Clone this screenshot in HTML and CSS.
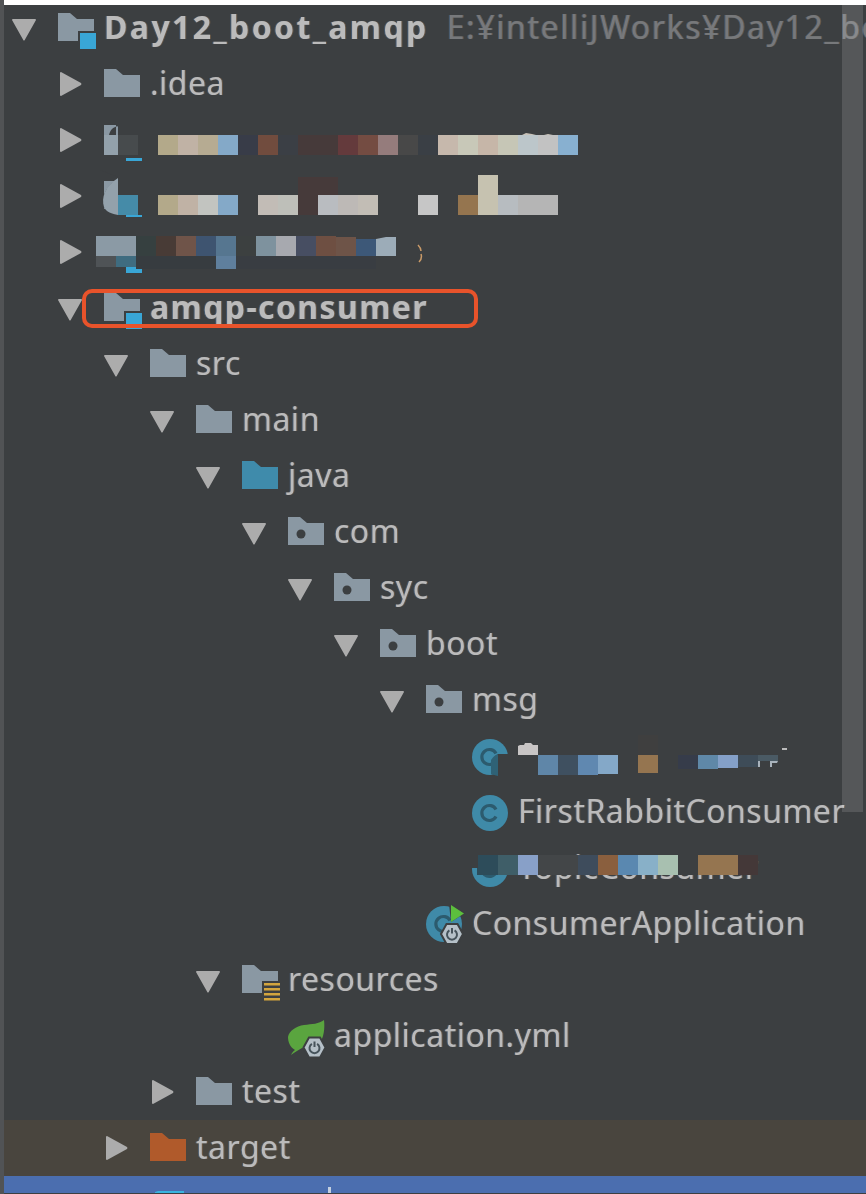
FILE: index.html
```html
<!DOCTYPE html>
<html lang="en">
<head>
  <meta charset="UTF-8">
  <meta name="viewport" content="width=device-width, initial-scale=1.0">
  <title>Project tree</title>
  <link rel="stylesheet" href="styles.css">
</head>
<body>

<svg class="sprites" aria-hidden="true">
  <defs>
    <g id="arrow-down"><path d="M1 3h22a1 1 0 0 1 1 1L13 23.500a1 1 0 0 1-2 0L0 4a1 1 0 0 1 1-1z"/></g>
    <g id="arrow-right"><path d="M2 1a1 1 0 0 1 1-1l20 11a1.500 1.500 0 0 1 0 2L3 24a1 1 0 0 1-1-1z"/></g>
    <g id="folder"><path d="M0-1h12l7 6h17v22H0z"/></g>
    <g id="module">
      <path d="M0-1h12l7 6h17v22H0z"/>
      <rect x="20" y="17" width="18" height="18" fill="#3c3f41"/>
      <rect x="22" y="19" width="16" height="16" fill="#39a6d6"/>
    </g>
    <g id="package">
      <path d="M0-1h12l7 6h17v22H0z"/>
      <circle cx="13" cy="16" r="4.500" fill="#3c3f41"/>
    </g>
    <g id="resources">
      <path d="M0-1h12l7 6h17v22H0z"/>
      <rect x="20" y="15" width="18" height="21" fill="#3c3f41"/>
      <path d="M22 17h16v2.500H22zM22 22h16v2.500H22zM22 27h16v2.500H22zM22 32h16v2.500H22z" fill="#d3a53e"/>
    </g>
    <g id="class">
      <circle cx="18" cy="15" r="18" fill="#3f8aa8"/>
      <path d="M24 11.500a7.500 7.500 0 1 0 0 7" fill="none" stroke="#2c5b6e" stroke-width="3.200"/>
    </g>
    <g id="spring-hex">
      <path d="M-5.500-10h11L11 0 5.500 10h-11L-11 0z" fill="#b5c0c8" stroke="#3c3f41" stroke-width="2"/>
      <path d="M-2.600-3.600a5 5 0 1 0 5.200 0" fill="none" stroke="#46535b" stroke-width="2"/>
      <path d="M0-6v5.500" stroke="#46535b" stroke-width="2"/>
    </g>
  </defs>
</svg>

<div class="page">
  <div class="tree">

    <div class="row d0">
      <svg class="arrow" viewBox="0 0 24 24"><use href="#arrow-down"/></svg>
      <svg class="icon folder" viewBox="0 0 36 28"><use href="#module"/></svg>
      <span class="label bold root-name">Day12_boot_amqp</span>
      <span class="label path">E:¥intelliJWorks¥Day12_boot_amqp</span>
    </div>

    <div class="row d1">
      <svg class="arrow" viewBox="0 0 24 24"><use href="#arrow-right"/></svg>
      <svg class="icon folder" viewBox="0 0 36 28"><use href="#folder"/></svg>
      <span class="label">.idea</span>
    </div>

    <div class="row d1">
      <svg class="arrow" viewBox="0 0 24 24"><use href="#arrow-right"/></svg>
      <svg class="icon folder" viewBox="0 0 36 28"><use href="#module"/></svg>
      <svg class="mosaic" viewBox="4 112 862 56">
        <path d="M116 120h44v38h-44zM118 126c-5 1-8 4-9 9h9z" fill="#3c3f41"/>
        <rect x="104" y="135" width="14" height="20" fill="#93a1ab"/>
        <rect x="118" y="135" width="20" height="20" fill="#474b4d"/>
        <rect x="158" y="135" width="20" height="20" fill="#b3a98a"/>
        <rect x="178" y="135" width="20" height="20" fill="#c0b2a5"/>
        <rect x="198" y="135" width="20" height="20" fill="#b6ab92"/>
        <rect x="218" y="135" width="20" height="20" fill="#84a9c8"/>
        <rect x="238" y="135" width="20" height="20" fill="#383c48"/>
        <rect x="258" y="135" width="20" height="20" fill="#714c3e"/>
        <rect x="278" y="135" width="20" height="20" fill="#3b3f45"/>
        <rect x="298" y="135" width="40" height="20" fill="#463a3a"/>
        <rect x="338" y="135" width="20" height="20" fill="#643a3c"/>
        <rect x="358" y="135" width="20" height="20" fill="#744c42"/>
        <rect x="378" y="135" width="20" height="20" fill="#957c7c"/>
        <rect x="398" y="135" width="20" height="20" fill="#484848"/>
        <rect x="418" y="135" width="20" height="20" fill="#3a3f45"/>
        <rect x="438" y="135" width="20" height="20" fill="#c6b8ac"/>
        <rect x="458" y="135" width="20" height="20" fill="#c8c8b8"/>
        <rect x="478" y="135" width="20" height="20" fill="#c6b6a8"/>
        <rect x="498" y="135" width="20" height="20" fill="#c6c6b6"/>
        <rect x="518" y="135" width="20" height="20" fill="#bcc6ca"/>
        <rect x="538" y="135" width="20" height="20" fill="#c2c2c2"/>
        <rect x="558" y="135" width="20" height="20" fill="#88b0d0"/>
        <path d="M522 135l4-2 6 1 4 1h8l4-1 5 1z" fill="#c8c2b8"/>
      </svg>
    </div>

    <div class="row d1">
      <svg class="arrow" viewBox="0 0 24 24"><use href="#arrow-right"/></svg>
      <svg class="icon folder" viewBox="0 0 36 28"><use href="#module"/></svg>
      <svg class="mosaic" viewBox="4 168 862 56">
        <path d="M100 170h60v45h-42v-1c-6 0-12-2-14-7-2-8 0-20 14-28v-2z" fill="#3c3f41"/>
        <path d="M118 178v37c-6-1-12-3-14-8-3-9 1-21 14-29z" fill="#93a1ab"/>
        <rect x="118" y="195" width="20" height="20" fill="#458ba8"/>
        <rect x="158" y="195" width="20" height="20" fill="#b3a98a"/>
        <rect x="178" y="195" width="20" height="20" fill="#c0b2a5"/>
        <rect x="198" y="195" width="20" height="20" fill="#c2c4c0"/>
        <rect x="218" y="195" width="20" height="20" fill="#84a9c8"/>
        <rect x="258" y="195" width="20" height="20" fill="#c2bcb6"/>
        <rect x="278" y="195" width="20" height="20" fill="#bebfb9"/>
        <path d="M298 177h40v18h-20v20h-20z" fill="#463a3a"/>
        <rect x="318" y="195" width="20" height="20" fill="#b9bcc0"/>
        <rect x="338" y="195" width="20" height="20" fill="#bdb9b6"/>
        <rect x="358" y="195" width="20" height="20" fill="#c2bdb5"/>
        <rect x="418" y="195" width="20" height="20" fill="#c6c6c6"/>
        <rect x="458" y="195" width="20" height="20" fill="#95754f"/>
        <rect x="478" y="175" width="20" height="40" fill="#c6c2b0"/>
        <rect x="498" y="195" width="20" height="20" fill="#b7bcc0"/>
        <rect x="518" y="195" width="40" height="20" fill="#b5b5b5"/>
      </svg>
    </div>

    <div class="row d1">
      <svg class="arrow" viewBox="0 0 24 24"><use href="#arrow-right"/></svg>
      <svg class="icon folder" viewBox="0 0 36 28"><use href="#module"/></svg>
      <svg class="mosaic" viewBox="4 224 862 56">
        <rect x="96" y="236" width="40" height="20" fill="#8b9aa5"/>
        <rect x="136" y="236" width="20" height="20" fill="#364040"/>
        <rect x="156" y="236" width="20" height="20" fill="#483b36"/>
        <rect x="176" y="236" width="20" height="20" fill="#6f5449"/>
        <rect x="196" y="236" width="20" height="20" fill="#3e5470"/>
        <rect x="216" y="236" width="20" height="20" fill="#567690"/>
        <rect x="236" y="236" width="20" height="20" fill="#3c4040"/>
        <rect x="256" y="236" width="20" height="20" fill="#7e929e"/>
        <rect x="276" y="236" width="20" height="20" fill="#a7a9af"/>
        <rect x="296" y="236" width="20" height="20" fill="#474e62"/>
        <rect x="316" y="236" width="20" height="20" fill="#6e4f42"/>
        <rect x="336" y="237" width="20" height="19" fill="#6e5448"/>
        <rect x="356" y="239" width="20" height="17" fill="#3d5878"/>
        <path d="M376 239l10-2h10v19h-20z" fill="#9cacb8"/>
        <rect x="96" y="256" width="20" height="11" fill="#4f5356"/>
        <rect x="116" y="256" width="20" height="11" fill="#3f6c80"/>
        <rect x="136" y="256" width="80" height="13" fill="#373c40"/>
        <rect x="216" y="256" width="20" height="13" fill="#5f7f9d"/>
        <rect x="236" y="256" width="140" height="13" fill="#393d42"/>
        <path d="M418 245c2 2 3 4 3 6M421 254c1 3 0 6-2 8" fill="none" stroke="#c99a68" stroke-width="1.500"/>
      </svg>
    </div>

    <div class="row d1">
      <svg class="arrow" viewBox="0 0 24 24"><use href="#arrow-down"/></svg>
      <svg class="icon folder" viewBox="0 0 36 28"><use href="#module"/></svg>
      <span class="label bold">amqp-consumer</span>
      <div class="highlight"></div>
    </div>

    <div class="row d2">
      <svg class="arrow" viewBox="0 0 24 24"><use href="#arrow-down"/></svg>
      <svg class="icon folder" viewBox="0 0 36 28"><use href="#folder"/></svg>
      <span class="label">src</span>
    </div>

    <div class="row d3">
      <svg class="arrow" viewBox="0 0 24 24"><use href="#arrow-down"/></svg>
      <svg class="icon folder" viewBox="0 0 36 28"><use href="#folder"/></svg>
      <span class="label">main</span>
    </div>

    <div class="row d4">
      <svg class="arrow" viewBox="0 0 24 24"><use href="#arrow-down"/></svg>
      <svg class="icon folder-java" viewBox="0 0 36 28"><use href="#folder"/></svg>
      <span class="label">java</span>
    </div>

    <div class="row d5">
      <svg class="arrow" viewBox="0 0 24 24"><use href="#arrow-down"/></svg>
      <svg class="icon folder" viewBox="0 0 36 28"><use href="#package"/></svg>
      <span class="label">com</span>
    </div>

    <div class="row d6">
      <svg class="arrow" viewBox="0 0 24 24"><use href="#arrow-down"/></svg>
      <svg class="icon folder" viewBox="0 0 36 28"><use href="#package"/></svg>
      <span class="label">syc</span>
    </div>

    <div class="row d7">
      <svg class="arrow" viewBox="0 0 24 24"><use href="#arrow-down"/></svg>
      <svg class="icon folder" viewBox="0 0 36 28"><use href="#package"/></svg>
      <span class="label">boot</span>
    </div>

    <div class="row d8">
      <svg class="arrow" viewBox="0 0 24 24"><use href="#arrow-down"/></svg>
      <svg class="icon folder" viewBox="0 0 36 28"><use href="#package"/></svg>
      <span class="label">msg</span>
    </div>

    <div class="row d9">
      <span class="no-arrow"></span>
      <svg class="icon" viewBox="0 0 36 28"><use href="#class"/></svg>
      <svg class="mosaic" viewBox="4 728 862 56">
        <path d="M491 770c0-8 2-13 7-16h20v22h-20l-7-2z" fill="#3c3f41"/>
        <path d="M491 760c2-3 4-5 7-6v22c-3-1-5-1-7-2z" fill="#2f6276"/>
        <path d="M518 755v-9l2-1h4l1-2h6l2 2h5v10z" fill="#c8c5c5"/>
        <rect x="538" y="755" width="20" height="20" fill="#5f86a8"/>
        <rect x="558" y="755" width="20" height="20" fill="#3f5060"/>
        <rect x="578" y="755" width="20" height="20" fill="#6088b0"/>
        <rect x="598" y="755" width="20" height="19" fill="#84a8c8"/>
        <rect x="638" y="735" width="20" height="20" fill="#3f3f3f"/>
        <rect x="638" y="755" width="20" height="18" fill="#957550"/>
        <rect x="678" y="755" width="20" height="14" fill="#363c4a"/>
        <rect x="698" y="755" width="20" height="14" fill="#5f88a8"/>
        <rect x="718" y="755" width="20" height="13" fill="#84a0c8"/>
        <rect x="738" y="755" width="20" height="12" fill="#3e4c58"/>
        <rect x="758" y="755" width="20" height="6" fill="#4a5a64"/>
        <path d="M758 761h2v6h-2zM770 761h8l-1 2h-5v4h-2z" fill="#a9b3bc"/>
        <rect x="782" y="748" width="5" height="2" fill="#bbb"/>
      </svg>
    </div>

    <div class="row d9">
      <span class="no-arrow"></span>
      <svg class="icon" viewBox="0 0 36 28"><use href="#class"/></svg>
      <span class="label">FirstRabbitConsumer</span>
    </div>

    <div class="row d9">
      <span class="no-arrow"></span>
      <svg class="icon" viewBox="0 0 36 28"><use href="#class"/></svg>
      <span class="label">TopicConsumer</span>
      <svg class="mosaic" viewBox="4 840 862 56">
        <rect x="477" y="855" width="21" height="20" fill="#2d4c5a"/>
        <rect x="498" y="855" width="20" height="20" fill="#3f5e68"/>
        <rect x="518" y="855" width="20" height="20" fill="#88a0c8"/>
        <rect x="538" y="855" width="40" height="20" fill="#434648"/>
        <rect x="578" y="855" width="20" height="20" fill="#3e4c5c"/>
        <rect x="598" y="855" width="20" height="20" fill="#8a5f3e"/>
        <rect x="618" y="855" width="20" height="20" fill="#5a88b0"/>
        <rect x="638" y="855" width="20" height="20" fill="#88b0c8"/>
        <rect x="658" y="855" width="20" height="20" fill="#a8c0b0"/>
        <rect x="678" y="855" width="20" height="20" fill="#3c3f41"/>
        <rect x="698" y="855" width="40" height="20" fill="#957550"/>
        <rect x="738" y="855" width="20" height="20" fill="#443838"/>
        <rect x="472" y="840" width="46" height="15" fill="#3c3f41"/>
        <rect x="472" y="850" width="6" height="18" fill="#3c3f41"/>
      </svg>
    </div>

    <div class="row d8">
      <span class="no-arrow"></span>
      <svg class="icon" viewBox="0 0 36 28">
        <circle cx="18" cy="14" r="18" fill="#3f8aa8"/>
        <path d="M24 10.500a7.500 7.500 0 1 0 0 7" fill="none" stroke="#2c5b6e" stroke-width="3.200"/>
        <path d="M23-6l16 9-14 9z" fill="#3c3f41"/>
        <path d="M25-5l13 8.500L25 12z" fill="#5cbf3d"/>
        <use href="#spring-hex" transform="translate(26 24)"/>
      </svg>
      <span class="label">ConsumerApplication</span>
    </div>

    <div class="row d4">
      <svg class="arrow" viewBox="0 0 24 24"><use href="#arrow-down"/></svg>
      <svg class="icon folder" viewBox="0 0 36 28"><use href="#resources"/></svg>
      <span class="label">resources</span>
    </div>

    <div class="row d5">
      <span class="no-arrow"></span>
      <svg class="icon" viewBox="0 0 36 28">
        <path d="M36-2c1 8 0 18-5 24-4 4-10 6-17 4-4 2-8 5-11 7 1-2 2-4 4-5-5-3-7-8-7-13C1 9 8 4 16 3c8-1 15-1 20-5z" fill="#5aa53f"/>
        <use href="#spring-hex" transform="translate(26.500 25.500)"/>
      </svg>
      <span class="label">application.yml</span>
    </div>

    <div class="row d3">
      <svg class="arrow" viewBox="0 0 24 24"><use href="#arrow-right"/></svg>
      <svg class="icon folder" viewBox="0 0 36 28"><use href="#folder"/></svg>
      <span class="label">test</span>
    </div>

    <div class="row d2 excluded">
      <svg class="arrow" viewBox="0 0 24 24"><use href="#arrow-right"/></svg>
      <svg class="icon folder-target" viewBox="0 0 36 28"><use href="#folder"/></svg>
      <span class="label">target</span>
    </div>

    <div class="selected">
      <svg class="mosaic" viewBox="4 1177 862 17">
        <path d="M155 1194v-1l3-1h26v2z" fill="#39b4e0"/>
        <rect x="328" y="1188" width="3" height="6" fill="#c4d0e0"/>
      </svg>
    </div>

  </div>

  <div class="scrollbar"></div>
  <div class="top-edge"></div>
</div>

</body>
</html>
```

FILE: styles.css
```css
html, body {
  margin: 0;
  padding: 0;
  height: 100%;
  overflow: hidden;
  background-color: #3c3f41;
}
.sprites {
  position: absolute;
  width: 0;
  height: 0;
}
.page {
  position: relative;
  height: 1194px;
  overflow: hidden;
  border-left: 4px solid #515355;
  font-family: "Noto Sans", Arial, sans-serif;
  font-size: 32px;
  color: #bbbbbb;
}
.top-edge {
  position: absolute;
  top: 0;
  left: -4px;
  right: 0;
  height: 5px;
  background: white;
}
.scrollbar {
  position: absolute;
  top: 5px;
  right: 3px;
  width: 21px;
  height: 807px;
  background: rgba(255, 255, 255, 0.13);
}
.tree {
  filter: blur(0.6px);
}

/* rows */
.row {
  position: relative;
  display: flex;
  align-items: center;
  height: 56px;
  white-space: nowrap;
}
.d0 { padding-left: 8px; }
.d1 { padding-left: 54px; }
.d2 { padding-left: 100px; }
.d3 { padding-left: 146px; }
.d4 { padding-left: 192px; }
.d5 { padding-left: 238px; }
.d6 { padding-left: 284px; }
.d7 { padding-left: 330px; }
.d8 { padding-left: 376px; }
.d9 { padding-left: 422px; }
.excluded {
  background-color: #49453e;
}
.selected {
  position: relative;
  height: 17px;
  background-color: #4b6eaf;
}

/* tree parts */
.arrow {
  flex: none;
  width: 24px;
  height: 24px;
  margin-right: 22px;
  overflow: visible;
  fill: #acacac;
}
.no-arrow {
  flex: none;
  width: 46px;
}
.icon {
  flex: none;
  width: 36px;
  height: 28px;
  margin-right: 10px;
  overflow: visible;
}
.folder { fill: #8a98a3; }
.folder-java { fill: #3f8bab; }
.folder-target { fill: #b05a2b; }

.label {
  margin-top: -4px;
  letter-spacing: 0.5px;
  text-shadow: 1px 0 0 rgba(205, 145, 85, 0.3), -1px 0 0 rgba(90, 150, 220, 0.3);
}
.bold {
  font-weight: bold;
  letter-spacing: 1.4px;
}
.root-name {
  letter-spacing: 2.4px;
}
.path {
  margin-left: 18px;
  letter-spacing: 1.6px;
  color: #77797b;
}
.mosaic {
  position: absolute;
  top: 0;
  left: 0;
  width: 862px;
  height: 100%;
  overflow: visible;
}
.highlight {
  position: absolute;
  left: 78px;
  top: 9px;
  width: 396px;
  height: 39px;
  box-sizing: border-box;
  border: 4px solid #e8532b;
  border-radius: 10px;
}
```
